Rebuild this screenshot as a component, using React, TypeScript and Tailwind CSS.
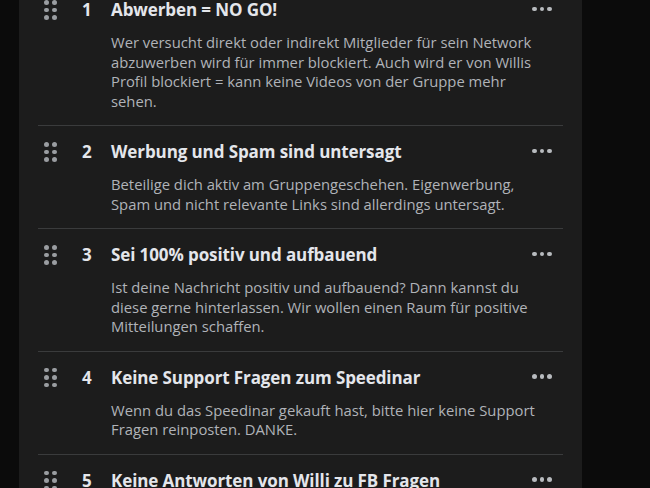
import React from "react";

type Rule = { n: number; title: string; lines: string[] };

const rules: Rule[] = [
  {
    n: 1,
    title: "Abwerben = NO GO!",
    lines: [
      "Wer versucht direkt oder indirekt Mitglieder für sein Network",
      "abzuwerben wird für immer blockiert. Auch wird er von Willis",
      "Profil blockiert = kann keine Videos von der Gruppe mehr",
      "sehen.",
    ],
  },
  {
    n: 2,
    title: "Werbung und Spam sind untersagt",
    lines: [
      "Beteilige dich aktiv am Gruppengeschehen. Eigenwerbung,",
      "Spam und nicht relevante Links sind allerdings untersagt.",
    ],
  },
  {
    n: 3,
    title: "Sei 100% positiv und aufbauend",
    lines: [
      "Ist deine Nachricht positiv und aufbauend? Dann kannst du",
      "diese gerne hinterlassen. Wir wollen einen Raum für positive",
      "Mitteilungen schaffen.",
    ],
  },
  {
    n: 4,
    title: "Keine Support Fragen zum Speedinar",
    lines: [
      "Wenn du das Speedinar gekauft hast, bitte hier keine Support",
      "Fragen reinposten. DANKE.",
    ],
  },
  {
    n: 5,
    title: "Keine Antworten von Willi zu FB Fragen",
    lines: [],
  },
];

function DragHandle() {
  return (
    <div className="grid grid-cols-2 gap-x-[3.5px] gap-y-[3px]">
      {[0, 1, 2, 3, 4, 5].map((i) => (
        <span key={i} className="block w-[4.5px] h-[4.5px] rounded-full bg-[#9a9da1]" />
      ))}
    </div>
  );
}

function MoreDots() {
  return (
    <div className="flex gap-[3px]">
      {[0, 1, 2].map((i) => (
        <span key={i} className="block w-[4.5px] h-[4.5px] rounded-full bg-[#b8bbbf]" />
      ))}
    </div>
  );
}

export default function App() {
  return (
    <div
      className="w-[650px] h-[488px] overflow-hidden bg-[#0b0b0b] flex"
      style={{ fontFamily: '"Open Sans", "Noto Sans", sans-serif' }}
    >
      <div className="ml-[19px] w-[563px] h-full bg-[#1c1c1c] px-[19px]">
        <div className="-mt-[16px]">
          {rules.map((r) => (
            <div key={r.n} className="flex border-b border-[#3a3b3c] pt-[14px] pb-[14px]">
              <div className="w-[44px] shrink-0 pl-[6px] h-[24px] flex items-center">
                <DragHandle />
              </div>
              <div className="w-[29px] shrink-0 h-[24px] flex items-center text-[17px] font-bold text-[#e4e6eb]">
                {r.n}
              </div>
              <div className="flex-1 min-w-0">
                <div className="h-[24px] leading-[24px] text-[17px] font-bold tracking-[-0.1px] text-[#e4e6eb] whitespace-nowrap">
                  {r.title}
                </div>
                {r.lines.length > 0 && (
                  <div className="mt-[11px] text-[14.8px] leading-[19.5px] text-[#b0b3b8]">
                    {r.lines.map((l, i) => (
                      <div key={i} className="whitespace-nowrap">
                        {l}
                      </div>
                    ))}
                  </div>
                )}
              </div>
              <div className="w-[31px] shrink-0 h-[22px] flex items-center">
                <MoreDots />
              </div>
            </div>
          ))}
        </div>
      </div>
    </div>
  );
}
